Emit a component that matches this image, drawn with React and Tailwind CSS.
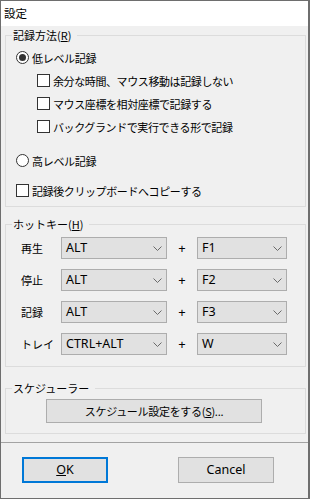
import React from 'react'

const jp = { fontFamily: '"Noto Sans CJK JP", "Noto Sans", sans-serif' }

function Radio({ checked, label }) {
  return (
    <div className="flex h-[23px] items-center">
      <span className="flex h-[13px] w-[13px] items-center justify-center rounded-full border border-[#333333] bg-white">
        {checked && <span className="h-[7px] w-[7px] rounded-full bg-[#333333]" />}
      </span>
      <span className="ml-[3px] text-[11px] leading-[14px] tracking-[-0.3px] text-black">{label}</span>
    </div>
  )
}

function Check({ label }) {
  return (
    <div className="flex h-[23px] items-center">
      <span className="h-[13px] w-[13px] border border-[#333333] bg-white" />
      <span className="ml-[3px] text-[11px] leading-[14px] tracking-[-0.4px] text-black">{label}</span>
    </div>
  )
}

function Combo({ value, width }) {
  return (
    <div
      className={`flex h-[22px] items-center justify-between border border-[#adadad] bg-[#e1e1e1] pl-[4px] pr-[4px] ${width}`}
    >
      <span className="text-[12.5px] leading-[14px] text-black" style={{ fontFamily: '"Noto Sans", sans-serif' }}>
        {value}
      </span>
      <svg width="9" height="5" viewBox="0 0 9 5" className="mt-[1px]">
        <path d="M0.5 0.5 L4.5 4.5 L8.5 0.5" fill="none" stroke="#6a6a6a" strokeWidth="1" />
      </svg>
    </div>
  )
}

function Group({ title, className, children }) {
  return (
    <div className={`relative border border-[#dcdcdc] ${className}`}>
      <span className="absolute left-[6px] top-[-9px] bg-[#f0f0f0] pl-[1px] pr-[6px] text-[11px] leading-[16px] text-black">
        {title}
      </span>
      {children}
    </div>
  )
}

const hotkeys = [
  ['再生', 'ALT', 'F1'],
  ['停止', 'ALT', 'F2'],
  ['記録', 'ALT', 'F3'],
  ['トレイ', 'CTRL+ALT', 'W'],
]

export default function App() {
  return (
    <div
      className="flex h-[499px] w-[310px] flex-col border-y border-l border-r-2 border-[#6e6e6e] bg-[#f0f0f0]"
      style={jp}
    >
      {/* title bar */}
      <div className="flex h-[25px] items-center bg-white pl-[3px] text-[11.5px] text-black">設定</div>

      {/* settings area */}
      <div className="flex h-[417px] flex-col border-b border-[#a3a3a3] pl-[4px] pr-[2px] pt-[9px]">
        <Group title={<>記録方法(<u>R</u>)</>} className="h-[172px] pl-[10px] pt-[10px]">
          <Radio checked label="低レベル記録" />
          <div className="pl-[21px]">
            <Check label="余分な時間、マウス移動は記録しない" />
            <Check label="マウス座標を相対座標で記録する" />
            <Check label="バックグランドで実行できる形で記録" />
          </div>
          <div className="mt-[11px]">
            <Radio label="高レベル記録" />
          </div>
          <div className="mt-[7px]">
            <Check label="記録後クリップボードへコピーする" />
          </div>
        </Group>

        <Group title={<>ホットキー(<u>H</u>)</>} className="mt-[17px] h-[143px] pl-[15px] pt-[12px]">
          <div className="flex flex-col gap-[10px]">
            {hotkeys.map(([name, mod, key]) => (
              <div key={name} className="flex items-center">
                <span className="w-[40px] text-[11px] leading-[14px] text-black">{name}</span>
                <Combo value={mod} width="w-[106px]" />
                <span
                  className="w-[30px] text-center text-[13px] leading-[14px] text-black"
                  style={{ fontFamily: '"Noto Sans", sans-serif' }}
                >
                  +
                </span>
                <Combo value={key} width="w-[90px]" />
              </div>
            ))}
          </div>
        </Group>

        <Group title="スケジューラー" className="mt-[21px] h-[46px] pl-[40px] pt-[10px]">
          <button className="flex h-[24px] w-[216px] items-center justify-center border border-[#adadad] bg-[#e1e1e1] text-[11px] leading-[14px] tracking-[-0.3px] text-black">
            スケジュール設定をする(<u>S</u>)...
          </button>
        </Group>
      </div>

      {/* buttons */}
      <div className="flex pl-[21px] pt-[14px]">
        <button
          className="flex h-[26px] w-[86px] items-center justify-center border-2 border-[#0078d7] bg-[#e1e1e1] text-[12.5px] text-black"
          style={{ fontFamily: '"Noto Sans", sans-serif' }}
        >
          <u>O</u>K
        </button>
        <button
          className="ml-[70px] flex h-[26px] w-[96px] items-center justify-center border border-[#adadad] bg-[#e1e1e1] text-[12.5px] text-black"
          style={{ fontFamily: '"Noto Sans", sans-serif' }}
        >
          Cancel
        </button>
      </div>
    </div>
  )
}
